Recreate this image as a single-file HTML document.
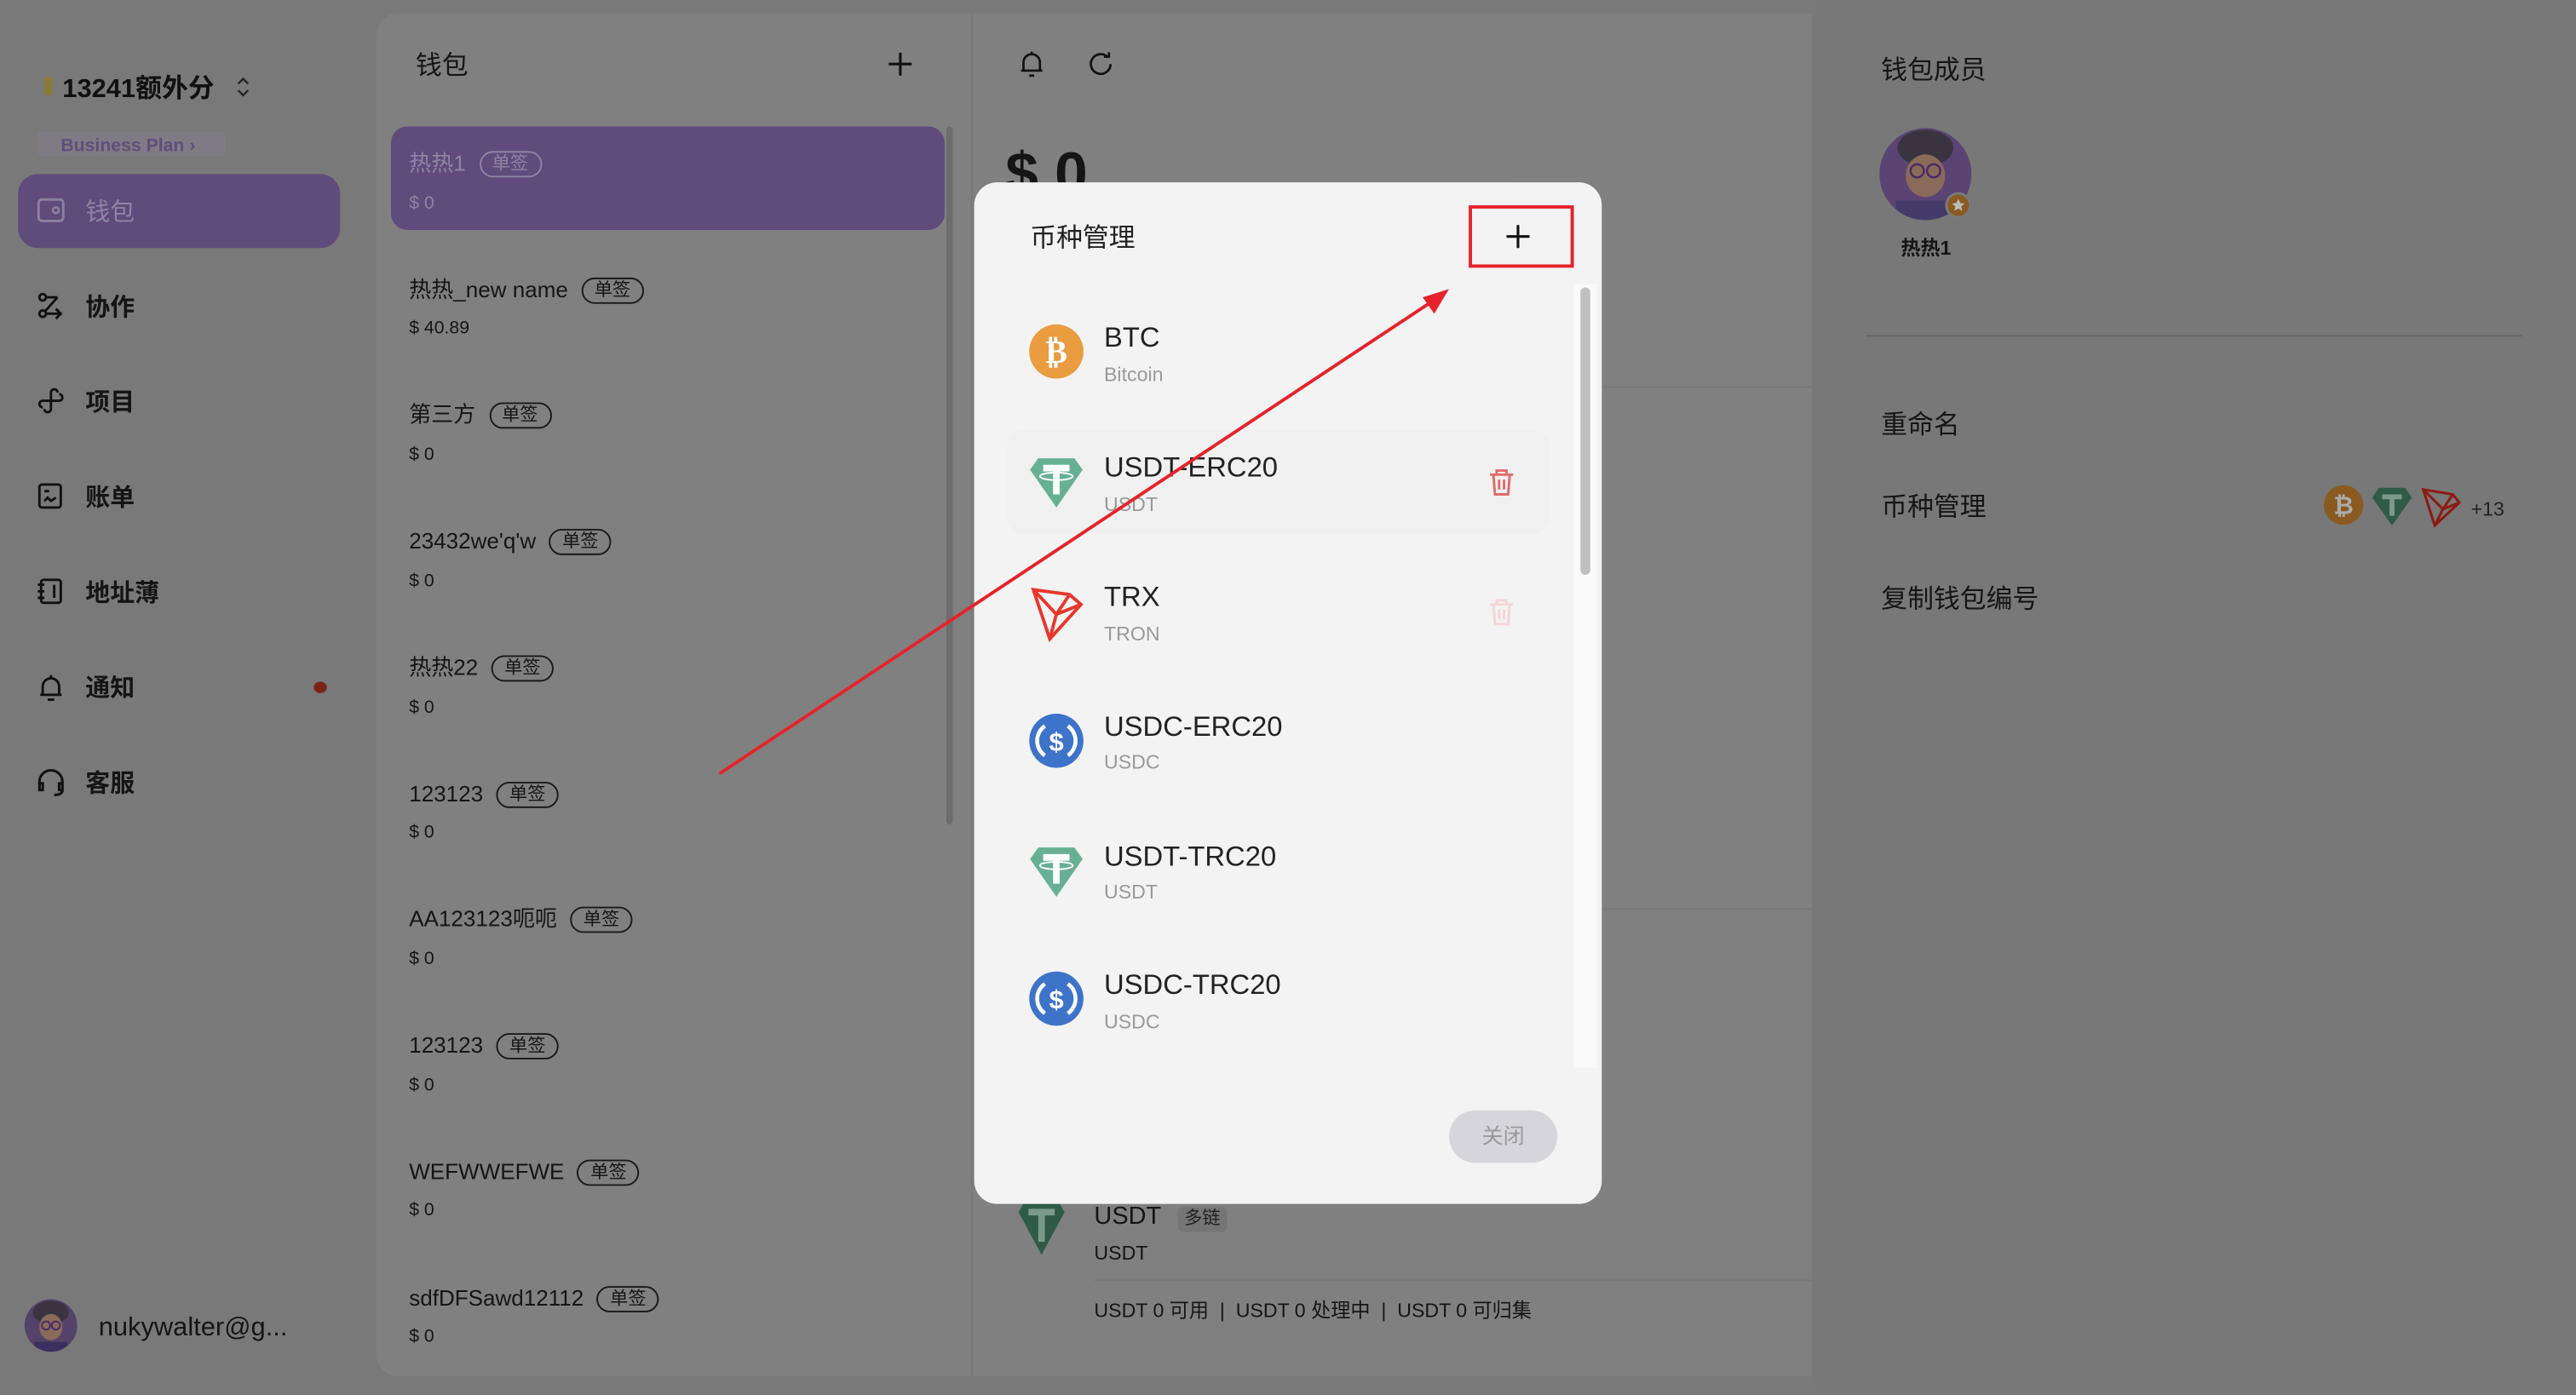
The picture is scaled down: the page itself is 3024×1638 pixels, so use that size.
<!DOCTYPE html>
<html><head><meta charset="utf-8">
<style>
*{margin:0;padding:0;box-sizing:border-box}
html,body{width:3024px;height:1638px;overflow:hidden;background:#797979}
#w{position:absolute;left:0;top:0;width:1568px;height:849px;transform:scale(1.92857);transform-origin:0 0;font-family:"Liberation Sans","Noto Sans CJK SC",sans-serif;color:#151515}
.a{position:absolute;white-space:nowrap}
.t{position:absolute;white-space:nowrap;line-height:20px;margin-top:2px}
.tag{display:inline-block;border:1.2px solid #1a1a1a;border-radius:9px;font-size:11px;line-height:14px;padding:0 7px;margin-left:8px;vertical-align:1px}
.amt{font-size:11px}
svg{position:absolute;overflow:visible}
</style></head><body><div id="w">
<!-- sidebar -->
<div class="a" style="left:0;top:0;width:228px;height:849px;background:#797979"></div>
<div class="a" style="left:27px;top:47px;width:5px;height:11px;background:#8a7a3a"></div>
<div class="t" style="left:38px;top:43px;font-size:16px;font-weight:bold;color:#111">13241额外分</div>
<svg style="left:143px;top:46px" width="10" height="14"><path d="M2 5 L5 2 L8 5 M2 9 L5 12 L8 9" stroke="#222" fill="none" stroke-width="1.2"/></svg>
<div class="a" style="left:23px;top:80px;width:114px;height:15px;background:#7e7b85;border-radius:3px"></div>
<div class="t" style="left:37px;top:77px;font-size:11px;color:#5e4f7a;font-weight:bold">Business Plan ›</div>
<div class="a" style="left:11px;top:106px;width:196px;height:45px;background:#5f4b7c;border-radius:12px"></div>
<svg style="left:22px;top:119px" width="18" height="18"><rect x="1.5" y="2.5" width="15" height="13" rx="2" stroke="#8a82a0" fill="none" stroke-width="1.5"/><circle cx="12" cy="9" r="1.8" stroke="#8a82a0" fill="none" stroke-width="1.3"/></svg>
<div class="t" style="left:52px;top:118px;font-size:15px;color:#8d85a3">钱包</div>
<div class="t" style="left:52px;top:176px;font-size:15px;font-weight:bold">协作</div>
<div class="t" style="left:52px;top:234px;font-size:15px;font-weight:bold">项目</div>
<div class="t" style="left:52px;top:292px;font-size:15px;font-weight:bold">账单</div>
<div class="t" style="left:52px;top:350px;font-size:15px;font-weight:bold">地址薄</div>
<div class="t" style="left:52px;top:408px;font-size:15px;font-weight:bold">通知</div>
<div class="t" style="left:52px;top:466px;font-size:15px;font-weight:bold">客服</div>
<svg style="left:23px;top:178px" width="16" height="16" fill="none" stroke="#111" stroke-width="1.5"><circle cx="3" cy="3" r="2"/><circle cx="3" cy="13" r="2"/><path d="M5 3h7 M12 3 L4 12 M5 13h9 M11 10l3 3-3 3"/></svg>
<svg style="left:23px;top:236px" width="16" height="16" fill="none" stroke="#111" stroke-width="1.5"><path d="M8 8V3a2 2 0 0 1 4 0 M8 8H3a2 2 0 0 0 0 4 M8 8v5a2 2 0 0 1-4 0 M8 8h5a2 2 0 0 0 0-4"/></svg>
<svg style="left:23px;top:294px" width="16" height="16" fill="none" stroke="#111" stroke-width="1.5"><rect x="1" y="1" width="13" height="14" rx="1.5"/><path d="M4 5h3 M4 11l2-2 2 2 3-2"/></svg>
<svg style="left:23px;top:352px" width="16" height="16" fill="none" stroke="#111" stroke-width="1.5"><rect x="2" y="1" width="12" height="14" rx="1.5"/><path d="M0 4h4 M0 8h4 M0 12h4 M10 4v8"/></svg>
<svg style="left:23px;top:410px" width="16" height="17" fill="none" stroke="#111" stroke-width="1.5"><path d="M3 13V8a5 5 0 0 1 10 0v5 M1.5 13h13 M6 16h4 M8 1v2"/></svg>
<svg style="left:22px;top:468px" width="18" height="17" fill="none" stroke="#111" stroke-width="1.6"><path d="M2 11V8a7 7 0 0 1 14 0v3 M2 9h2v4H2z M14 9h2v4h-2z M16 13c0 2-2 3-5 3"/></svg>
<div class="a" style="left:191px;top:415px;width:8px;height:7px;border-radius:50%;background:#7a2418"></div>
<svg style="left:15px;top:791px" width="32" height="32"><defs><clipPath id="c1"><circle cx="16" cy="16" r="16"/></clipPath></defs><g clip-path="url(#c1)"><rect width="32" height="32" fill="#54426a"/><ellipse cx="16" cy="8" rx="11" ry="7" fill="#3a3440"/><ellipse cx="16" cy="17" rx="7" ry="8" fill="#8a6a58"/><circle cx="13" cy="16" r="2.5" fill="none" stroke="#4a2a6a"/><circle cx="19" cy="16" r="2.5" fill="none" stroke="#4a2a6a"/><rect x="6" y="26" width="20" height="8" fill="#3a3060"/></g></svg>
<div class="t" style="left:60px;top:797px;font-size:16px">nukywalter@g...</div>

<!-- wallet list panel -->
<div class="a" style="left:229px;top:8px;width:380px;height:830px;background:#808080;border-radius:14px"></div>
<div class="t" style="left:253px;top:29px;font-size:16px">钱包</div>
<svg style="left:540px;top:31px" width="16" height="16"><path d="M8 1v14 M1 8h14" stroke="#111" stroke-width="1.6"/></svg>
<div class="a" style="left:238px;top:77px;width:337px;height:63px;background:#5f4b7c;border-radius:10px"></div>
<div class="a" style="left:576px;top:77px;width:4px;height:425px;background:#6c6c6c;border-radius:2px"></div>
<div class="t" style="left:249px;top:88px;font-size:13.5px;color:#8d85a3">热热1<span class="tag" style="border-color:#8d85a3;color:#8d85a3">单签</span></div>
<div class="t amt" style="left:249px;top:112px;color:#8d85a3">$ 0</div>
<div class="t" style="left:249px;top:165px;font-size:13.5px">热热_new name<span class="tag">单签</span></div>
<div class="t amt" style="left:249px;top:188px">$ 40.89</div>
<div class="t" style="left:249px;top:241px;font-size:13.5px">第三方<span class="tag">单签</span></div>
<div class="t amt" style="left:249px;top:265px">$ 0</div>
<div class="t" style="left:249px;top:318px;font-size:13.5px">23432we'q'w<span class="tag">单签</span></div>
<div class="t amt" style="left:249px;top:342px">$ 0</div>
<div class="t" style="left:249px;top:395px;font-size:13.5px">热热22<span class="tag">单签</span></div>
<div class="t amt" style="left:249px;top:419px">$ 0</div>
<div class="t" style="left:249px;top:472px;font-size:13.5px">123123<span class="tag">单签</span></div>
<div class="t amt" style="left:249px;top:495px">$ 0</div>
<div class="t" style="left:249px;top:548px;font-size:13.5px">AA123123呃呃<span class="tag">单签</span></div>
<div class="t amt" style="left:249px;top:572px">$ 0</div>
<div class="t" style="left:249px;top:625px;font-size:13.5px">123123<span class="tag">单签</span></div>
<div class="t amt" style="left:249px;top:649px">$ 0</div>
<div class="t" style="left:249px;top:702px;font-size:13.5px">WEFWWEFWE<span class="tag">单签</span></div>
<div class="t amt" style="left:249px;top:725px">$ 0</div>
<div class="t" style="left:249px;top:779px;font-size:13.5px">sdfDFSawd12112<span class="tag">单签</span></div>
<div class="t amt" style="left:249px;top:802px">$ 0</div>

<!-- main -->
<div class="a" style="left:591px;top:8px;width:512px;height:830px;background:#808080;border-left:1px solid #777"></div>
<svg style="left:620px;top:30px" width="16" height="18" fill="none" stroke="#111" stroke-width="1.4"><path d="M3 13V8a5 5 0 0 1 10 0v5 M1.5 13h13 M6.5 16h3 M8 1.5v1.5"/></svg>
<svg style="left:662px;top:31px" width="16" height="16" fill="none" stroke="#111" stroke-width="1.4"><path d="M12.5 4A6 6 0 1 0 14 8 M10 3.5h3V0.8"/></svg>
<div class="t" style="left:612px;top:84px;font-size:36px;font-weight:bold;line-height:40px">$ 0</div>
<div class="a" style="left:592px;top:235px;width:511px;height:1px;background:#787878"></div>
<div class="a" style="left:592px;top:553px;width:511px;height:1px;background:#787878"></div>
<div class="a" style="left:666px;top:779px;width:437px;height:1px;background:#787878"></div>
<svg style="left:616px;top:729px" width="36" height="36"><path d="M4 9 L8 2 H28 L32 9 L18 35 Z" fill="#2f5a48"/><path d="M10 7h16v4h-6v16h-4V11h-6z" fill="#7c9a8c"/></svg>
<div class="t" style="left:666px;top:729px;font-size:15px">USDT<span style="display:inline-block;margin-left:10px;font-size:11px;background:#757575;padding:0 4px;border-radius:3px;line-height:15px;color:#222">多链</span></div>
<div class="t" style="left:666px;top:751px;font-size:12px">USDT</div>
<div class="t" style="left:666px;top:786px;font-size:12px">USDT 0 可用 &nbsp;|&nbsp; USDT 0 处理中 &nbsp;|&nbsp; USDT 0 可归集</div>

<!-- right -->
<div class="a" style="left:1104px;top:0;width:464px;height:849px;background:#787878"></div>
<div class="t" style="left:1145px;top:32px;font-size:16px">钱包成员</div>
<svg style="left:1144px;top:78px" width="58" height="58"><defs><clipPath id="c2"><circle cx="28" cy="28" r="28"/></clipPath></defs><g clip-path="url(#c2)"><rect width="56" height="56" fill="#5a4474"/><ellipse cx="28" cy="12" rx="17" ry="11" fill="#3a3440"/><ellipse cx="28" cy="29" rx="12" ry="13" fill="#8a6a58"/><circle cx="23" cy="26" r="4" fill="none" stroke="#4a2a6a" stroke-width="1.3"/><circle cx="33" cy="26" r="4" fill="none" stroke="#4a2a6a" stroke-width="1.3"/><rect x="10" y="44" width="36" height="14" fill="#443a6a"/></g><circle cx="48" cy="47" r="8" fill="#7a7a7a"/><circle cx="48" cy="47" r="6.5" fill="#8a5a20"/><path d="M48 43l1.2 2.6 2.6.3-2 1.8.6 2.7-2.4-1.4-2.4 1.4.6-2.7-2-1.8 2.6-.3z" fill="#bbb"/></svg>
<div class="t" style="left:1157px;top:139px;font-size:12px;font-weight:bold">热热1</div>
<div class="a" style="left:1136px;top:204px;width:399px;height:1px;background:#666"></div>
<div class="t" style="left:1145px;top:248px;font-size:16px">重命名</div>
<div class="t" style="left:1145px;top:298px;font-size:16px">币种管理</div>
<div class="t" style="left:1145px;top:354px;font-size:16px">复制钱包编号</div>
<svg style="left:1414px;top:295px" width="26" height="26"><circle cx="12.5" cy="12.5" r="12" fill="#8a5a20"/><text x="12.5" y="18" font-size="15" font-weight="bold" fill="#aaa" text-anchor="middle" font-family="Liberation Sans">₿</text></svg>
<svg style="left:1443px;top:296px" width="26" height="26"><path d="M1 7 L5 1 H21 L25 7 L13 24 Z" fill="#2f5a48"/><path d="M7 5h12v3h-4.5v10h-3V8H7z" fill="#7c9a8c"/></svg>
<svg style="left:1474px;top:296px" width="24" height="26" fill="none" stroke="#8a1c14" stroke-width="1.6"><path d="M1 2 L19 5 L23 10 L8 24 Z M1 2 L13 14 L23 10 M13 14 L8 24 M19 5 L13 14"/></svg>
<div class="t" style="left:1504px;top:298px;font-size:12px;color:#222">+13</div>

<!-- modal -->
<div class="a" style="left:593px;top:111px;width:382px;height:622px;background:#f3f3f3;border-radius:14px"></div>
<div class="t" style="left:627px;top:134px;font-size:16px;color:#222">币种管理</div>
<div class="a" style="left:894px;top:125px;width:64px;height:38px;border:2px solid #e5232a"></div>
<svg style="left:916px;top:136px" width="16" height="16"><path d="M8 1v14 M1 8h14" stroke="#111" stroke-width="1.6"/></svg>
<div class="a" style="left:958px;top:173px;width:14px;height:477px;background:#fafafa"></div>
<div class="a" style="left:962px;top:175px;width:6px;height:175px;background:#c0c0c0;border-radius:3px"></div>
<div class="a" style="left:613px;top:262px;width:330px;height:63px;background:#f0f0f0;border-radius:10px"></div>

<svg style="left:626px;top:197px" width="34" height="34"><circle cx="17" cy="17" r="16.5" fill="#e99c40"/><text x="17" y="24" font-size="20" font-weight="bold" fill="#fff" text-anchor="middle" font-family="DejaVu Sans">₿</text></svg>
<div class="t" style="left:672px;top:194px;font-size:17px;color:#222">BTC</div>
<div class="t" style="left:672px;top:216px;font-size:12px;color:#999">Bitcoin</div>

<svg style="left:626px;top:276px" width="34" height="34"><path d="M1 10 L6 3 H28 L33 10 L17 33 Z" fill="#67b094"/><path d="M9 7h16v4h-6v14h-4V11H9z" fill="#fff"/><ellipse cx="17" cy="14" rx="10" ry="2.3" fill="none" stroke="#fff" stroke-width="1"/></svg>
<div class="t" style="left:672px;top:273px;font-size:17px;color:#222">USDT-ERC20</div>
<div class="t" style="left:672px;top:295px;font-size:12px;color:#999">USDT</div>
<svg style="left:906px;top:285px" width="16" height="17" fill="none" stroke="#e06a6a" stroke-width="1.5"><path d="M1 4h14 M5 4V1.5h6V4 M3 4l1 12h8l1-12 M6.5 7v6 M9.5 7v6"/></svg>

<svg style="left:626px;top:355px" width="34" height="34" fill="none" stroke="#e8362c" stroke-width="2"><path d="M3 4 L25 7 L32 13 L13 34 Z M3 4 L17 19 L32 13 M17 19 L13 34 M25 7 L17 19"/></svg>
<div class="t" style="left:672px;top:352px;font-size:17px;color:#222">TRX</div>
<div class="t" style="left:672px;top:374px;font-size:12px;color:#999">TRON</div>
<svg style="left:906px;top:364px" width="16" height="17" fill="none" stroke="#f2d6d6" stroke-width="1.5"><path d="M1 4h14 M5 4V1.5h6V4 M3 4l1 12h8l1-12 M6.5 7v6 M9.5 7v6"/></svg>

<svg style="left:626px;top:434px" width="34" height="34"><circle cx="17" cy="17" r="16.5" fill="#3d73c9"/><path d="M10 8A11 11 0 0 0 10 26 M24 8A11 11 0 0 1 24 26" stroke="#fff" stroke-width="2.4" fill="none"/><text x="17" y="23" font-size="16" font-weight="bold" fill="#fff" text-anchor="middle" font-family="Liberation Sans">$</text></svg>
<div class="t" style="left:672px;top:431px;font-size:17px;color:#222">USDC-ERC20</div>
<div class="t" style="left:672px;top:452px;font-size:12px;color:#999">USDC</div>

<svg style="left:626px;top:513px" width="34" height="34"><path d="M1 10 L6 3 H28 L33 10 L17 33 Z" fill="#67b094"/><path d="M9 7h16v4h-6v14h-4V11H9z" fill="#fff"/><ellipse cx="17" cy="14" rx="10" ry="2.3" fill="none" stroke="#fff" stroke-width="1"/></svg>
<div class="t" style="left:672px;top:510px;font-size:17px;color:#222">USDT-TRC20</div>
<div class="t" style="left:672px;top:531px;font-size:12px;color:#999">USDT</div>

<svg style="left:626px;top:591px" width="34" height="34"><circle cx="17" cy="17" r="16.5" fill="#3d73c9"/><path d="M10 8A11 11 0 0 0 10 26 M24 8A11 11 0 0 1 24 26" stroke="#fff" stroke-width="2.4" fill="none"/><text x="17" y="23" font-size="16" font-weight="bold" fill="#fff" text-anchor="middle" font-family="Liberation Sans">$</text></svg>
<div class="t" style="left:672px;top:588px;font-size:17px;color:#222">USDC-TRC20</div>
<div class="t" style="left:672px;top:610px;font-size:12px;color:#999">USDC</div>

<div class="a" style="left:882px;top:676px;width:66px;height:32px;background:#d6d6da;border-radius:16px;text-align:center;line-height:32px;font-size:13px;color:#999">关闭</div>

<!-- arrow -->
<svg style="left:0;top:0" width="1568" height="849"><line x1="438" y1="471" x2="874" y2="182" stroke="#e5232a" stroke-width="2"/><path d="M882 176 L866 181 L873 191 Z" fill="#e5232a"/></svg>
</div></body></html>
